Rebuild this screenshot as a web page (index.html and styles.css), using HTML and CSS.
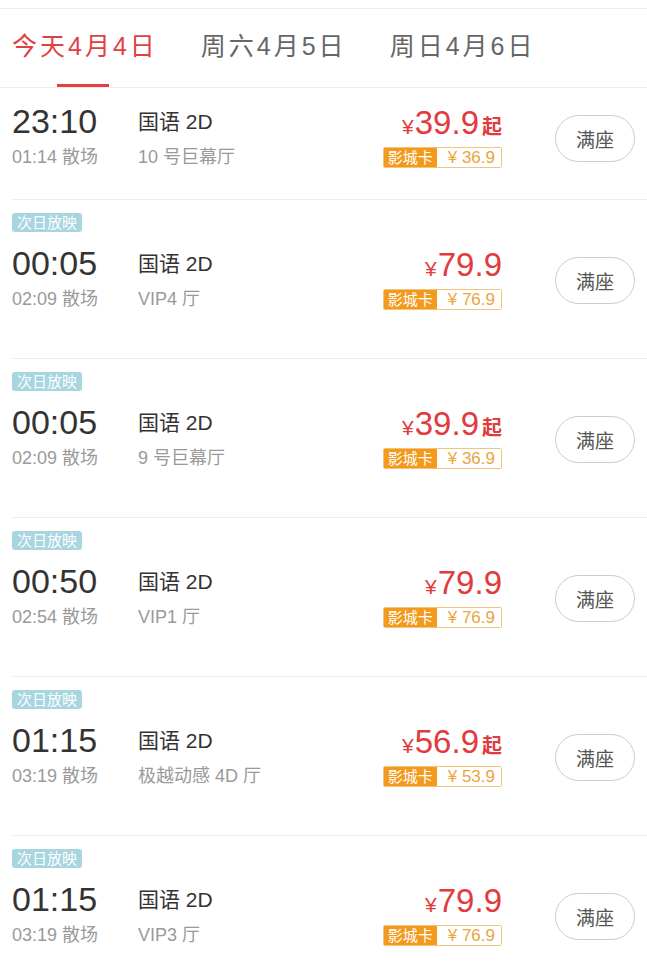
FILE: index.html
```html
<!DOCTYPE html>
<html lang="zh-CN">

<head>
  <meta charset="UTF-8">
  <meta name="viewport" content="width=device-width, initial-scale=1.0">
  <title>场次列表</title>
  <link rel="stylesheet" href="styles.css">
</head>

<body>
  <div class="top-line"></div>

  <div class="tabs">
    <div class="tab active">
      <span class="tab-text">今天4月4日</span>
      <span class="tab-bar"></span>
    </div>
    <div class="tab">
      <span class="tab-text">周六4月5日</span>
      <span class="tab-bar"></span>
    </div>
    <div class="tab">
      <span class="tab-text">周日4月6日</span>
      <span class="tab-bar"></span>
    </div>
  </div>

  <ul class="shows">
    <li class="show">
      <div class="show-main">
        <div class="times">
          <div class="start">23:10</div>
          <div class="end">01:14 散场</div>
        </div>
        <div class="info">
          <div class="lang">国语 2D</div>
          <div class="hall">10 号巨幕厅</div>
        </div>
        <div class="price">
          <div class="price-line"><span class="yen">¥</span>39.9<span class="from">起</span></div>
          <div class="card"><span class="card-name">影城卡</span><span class="card-price">¥ 36.9</span></div>
        </div>
        <button class="seat">满座</button>
      </div>
    </li>

    <li class="show next-day">
      <span class="tag">次日放映</span>
      <div class="show-main">
        <div class="times">
          <div class="start">00:05</div>
          <div class="end">02:09 散场</div>
        </div>
        <div class="info">
          <div class="lang">国语 2D</div>
          <div class="hall">VIP4 厅</div>
        </div>
        <div class="price">
          <div class="price-line"><span class="yen">¥</span>79.9</div>
          <div class="card"><span class="card-name">影城卡</span><span class="card-price">¥ 76.9</span></div>
        </div>
        <button class="seat">满座</button>
      </div>
    </li>

    <li class="show next-day">
      <span class="tag">次日放映</span>
      <div class="show-main">
        <div class="times">
          <div class="start">00:05</div>
          <div class="end">02:09 散场</div>
        </div>
        <div class="info">
          <div class="lang">国语 2D</div>
          <div class="hall">9 号巨幕厅</div>
        </div>
        <div class="price">
          <div class="price-line"><span class="yen">¥</span>39.9<span class="from">起</span></div>
          <div class="card"><span class="card-name">影城卡</span><span class="card-price">¥ 36.9</span></div>
        </div>
        <button class="seat">满座</button>
      </div>
    </li>

    <li class="show next-day">
      <span class="tag">次日放映</span>
      <div class="show-main">
        <div class="times">
          <div class="start">00:50</div>
          <div class="end">02:54 散场</div>
        </div>
        <div class="info">
          <div class="lang">国语 2D</div>
          <div class="hall">VIP1 厅</div>
        </div>
        <div class="price">
          <div class="price-line"><span class="yen">¥</span>79.9</div>
          <div class="card"><span class="card-name">影城卡</span><span class="card-price">¥ 76.9</span></div>
        </div>
        <button class="seat">满座</button>
      </div>
    </li>

    <li class="show next-day">
      <span class="tag">次日放映</span>
      <div class="show-main">
        <div class="times">
          <div class="start">01:15</div>
          <div class="end">03:19 散场</div>
        </div>
        <div class="info">
          <div class="lang">国语 2D</div>
          <div class="hall">极越动感 4D 厅</div>
        </div>
        <div class="price">
          <div class="price-line"><span class="yen">¥</span>56.9<span class="from">起</span></div>
          <div class="card"><span class="card-name">影城卡</span><span class="card-price">¥ 53.9</span></div>
        </div>
        <button class="seat">满座</button>
      </div>
    </li>

    <li class="show next-day">
      <span class="tag">次日放映</span>
      <div class="show-main">
        <div class="times">
          <div class="start">01:15</div>
          <div class="end">03:19 散场</div>
        </div>
        <div class="info">
          <div class="lang">国语 2D</div>
          <div class="hall">VIP3 厅</div>
        </div>
        <div class="price">
          <div class="price-line"><span class="yen">¥</span>79.9</div>
          <div class="card"><span class="card-name">影城卡</span><span class="card-price">¥ 76.9</span></div>
        </div>
        <button class="seat">满座</button>
      </div>
    </li>
  </ul>
</body>

</html>
```

FILE: styles.css
```css
* {
  box-sizing: border-box;
}

body {
  margin: 0;
  background-color: #ffffff;
  font-family: "Liberation Sans", "Noto Sans CJK SC", sans-serif;
  color: #333333;
  overflow: hidden;
}

.top-line {
  margin-top: 8px;
  border-top: 1px solid #eeeeee;
}

/* date tabs */
.tabs {
  display: flex;
  gap: 43px;
  height: 79px;
  padding-left: 12px;
  border-bottom: 1px solid #eeeeee;
}

.tab {
  display: flex;
  flex-direction: column;
  align-items: center;
}

.tab-text {
  height: 34px;
  margin-top: 20px;
  font-size: 25px;
  line-height: 34px;
  letter-spacing: 3px;
  white-space: nowrap;
  color: #666666;
}

.tab-bar {
  width: 52px;
  height: 3px;
  margin-top: 21px;
  margin-right: 3px;
}

.tab.active .tab-text {
  color: #e2403f;
}

.tab.active .tab-bar {
  background-color: #e2403f;
}

/* show rows */
.shows {
  list-style-type: none;
  margin: 0;
  padding: 0;
}

.show {
  height: 112px;
  margin-left: 12px;
  padding: 13px 12px 0 0;
  border-bottom: 1px solid #eeeeee;
}

.show.next-day {
  height: 159px;
}

.tag {
  display: block;
  width: 70px;
  height: 19px;
  margin-bottom: 11px;
  border-radius: 3px;
  background-color: #a7d5e0;
  color: #ffffff;
  font-size: 15px;
  line-height: 19px;
  text-align: center;
}

.show-main {
  display: flex;
  align-items: flex-start;
}

.times {
  width: 126px;
}

.start {
  height: 41px;
  font-size: 34px;
  line-height: 41px;
  color: #333333;
}

.end,
.hall {
  height: 20px;
  margin-top: 5px;
  font-size: 18px;
  line-height: 20px;
  white-space: nowrap;
  color: #9a9a9a;
}

.info {
  flex: 1;
}

.lang {
  height: 41px;
  font-size: 21px;
  line-height: 41px;
  color: #333333;
}

.price {
  display: flex;
  flex-direction: column;
  align-items: flex-end;
  margin-top: 4px;
  margin-right: 53px;
}

.price-line {
  height: 36px;
  font-size: 33px;
  line-height: 36px;
  white-space: nowrap;
  color: #e23b3e;
}

.yen {
  font-size: 21px;
  margin-right: 1px;
}

.from {
  font-size: 20px;
  font-weight: bold;
  margin-left: 3px;
}

.card {
  display: flex;
  height: 21px;
  margin-top: 6px;
  border: 1px solid #f2c47e;
  border-radius: 2px;
  line-height: 19px;
  white-space: nowrap;
}

.card-name {
  padding: 0 4px;
  background-color: #f39a1d;
  color: #ffffff;
  font-size: 15px;
}

.card-price {
  padding: 0 6px 0 11px;
  background-color: #ffffff;
  color: #eba440;
  font-size: 17px;
}

.seat {
  width: 80px;
  height: 47px;
  margin-top: 14px;
  padding: 0;
  border: 1px solid #cccccc;
  border-radius: 24px;
  background-color: #ffffff;
  font-family: "Noto Sans CJK SC", sans-serif;
  font-size: 19px;
  color: #555555;
}
```
